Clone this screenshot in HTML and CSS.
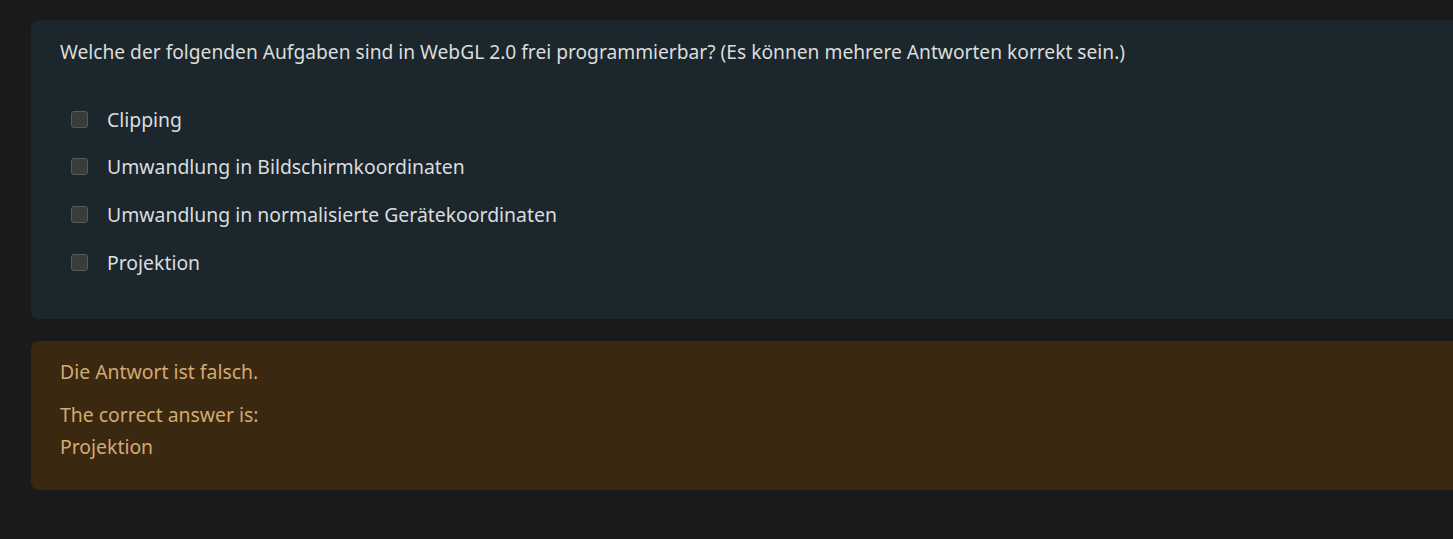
FILE: index.html
```html
<!DOCTYPE html>
<html lang="de">
<head>
<meta charset="utf-8">
<link rel="stylesheet" href="styles.css">
</head>
<body>
<div class="page">
  <section class="card question">
    <p class="qtext">Welche der folgenden Aufgaben sind in WebGL 2.0 frei programmierbar? (Es können mehrere Antworten korrekt sein.)</p>
    <ul class="answers">
      <li class="answer"><span class="box"></span><span class="label">Clipping</span></li>
      <li class="answer"><span class="box"></span><span class="label">Umwandlung in Bildschirmkoordinaten</span></li>
      <li class="answer"><span class="box"></span><span class="label">Umwandlung in normalisierte Gerätekoordinaten</span></li>
      <li class="answer"><span class="box"></span><span class="label">Projektion</span></li>
    </ul>
  </section>
  <section class="card feedback">
    <p class="verdict">Die Antwort ist falsch.</p>
    <p class="right">The correct answer is:<br>Projektion</p>
  </section>
</div>
</body>
</html>
```
FILE: styles.css
```css
html, body {
  margin: 0;
  padding: 0;
  background: #191a1a;
}
body {
  font-family: "Noto Sans", "Open Sans", sans-serif;
  font-size: 19.4px;
  color: #dcdcdc;
}
.page {
  padding: 20px 0 0 31px;
  display: flex;
  flex-direction: column;
  gap: 22px;
}
.card {
  border-radius: 8px 0 0 8px;
  box-sizing: border-box;
}
.question {
  background: #1b272c;
  height: 299px;
  padding: 18px 0 0 29px;
}
.qtext {
  margin: 0;
  font-size: 19.2px;
  line-height: 28px;
}
.answers {
  list-style: none;
  margin: 39px 0 0 0;
  padding: 0 0 0 11px;
  display: flex;
  flex-direction: column;
  gap: 19.7px;
}
.answer {
  display: flex;
  align-items: center;
  height: 28px;
  gap: 19px;
}
.box {
  width: 15px;
  height: 15px;
  border: 1px solid #575a5b;
  background: #3a3b3b;
  border-radius: 3px;
}
.feedback {
  background: #3a2811;
  height: 149px;
  padding: 16px 0 0 29px;
  color: #d3aa72;
}
.verdict {
  margin: 0;
  line-height: 30px;
}
.right {
  margin: 12px 0 0 0;
  line-height: 32px;
}
```
